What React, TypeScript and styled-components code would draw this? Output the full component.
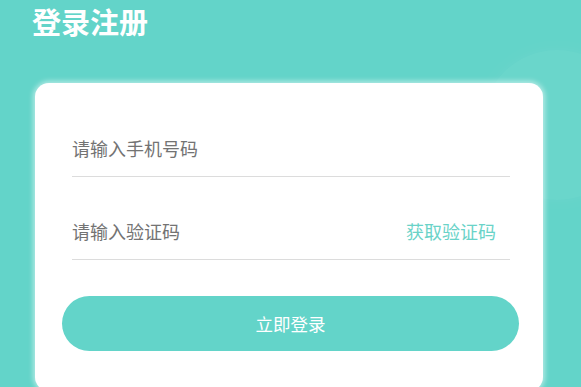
import styled, { createGlobalStyle } from "styled-components";

const GlobalStyle = createGlobalStyle`
  html, body {
    margin: 0;
    padding: 0;
    background: #63d4c9;
    font-family: "Noto Sans CJK SC", "Noto Sans", sans-serif;
  }
`

const Page = styled.div`
  position: relative;
  width: 581px;
  height: 387px;
  overflow: hidden;
  background: #63d4c9;
`

const Bubble = styled.div`
  position: absolute;
  left: 482px;
  top: 50px;
  width: 150px;
  height: 150px;
  border-radius: 50%;
  background: rgba(255, 255, 255, 0.05);
  box-shadow: 0 0 20px rgba(255, 255, 255, 0.05);
`

const Title = styled.h1`
  margin: 0;
  padding: 0 0 0 32px;
  line-height: 42px;
  font-size: 29px;
  font-weight: 700;
  color: #ffffff;
`

const Card = styled.div`
  position: relative;
  margin: 41px 38px 0 35px;
  padding: 11px 24px 40px 27px;
  background: #ffffff;
  border-radius: 14px;
  box-shadow: 0 0 5px 2px rgba(255, 255, 255, 0.5);
`

const Field = styled.div`
  display: flex;
  align-items: flex-end;
  justify-content: space-between;
  height: 83px;
  margin: 0 9px 0 10px;
  padding-bottom: 16px;
  box-sizing: border-box;
  border-bottom: 1px solid #dcdcdc;
`

const Input = styled.input`
  flex: 1;
  border: none;
  outline: none;
  padding: 0;
  height: 24px;
  font-family: inherit;
  font-size: 18px;
  color: #333;
  background: transparent;

  &::placeholder {
    color: #737373;
  }
`

const CodeLink = styled.span`
  font-size: 18px;
  line-height: 24px;
  color: #6ad3c8;
  margin-right: 14px;
`

const Submit = styled.button`
  display: block;
  width: 100%;
  height: 55px;
  margin-top: 36px;
  border: none;
  border-radius: 28px;
  background: #63d4c9;
  color: #ffffff;
  font-family: inherit;
  font-size: 17.5px;
`

export default function App() {
    return (
        <Page>
            <GlobalStyle/>
            <Bubble/>
            <Title>登录注册</Title>
            <Card>
                <Field>
                    <Input placeholder="请输入手机号码"/>
                </Field>
                <Field>
                    <Input placeholder="请输入验证码"/>
                    <CodeLink>获取验证码</CodeLink>
                </Field>
                <Submit>立即登录</Submit>
            </Card>
        </Page>
    )
}
